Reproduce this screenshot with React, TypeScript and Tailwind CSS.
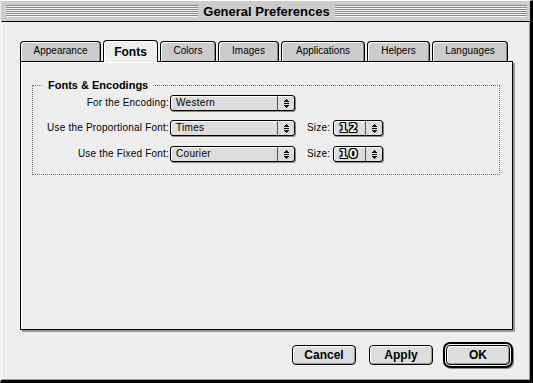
import React from "react";

function Arrows() {
  return (
    <svg width="7" height="9" viewBox="0 0 7 9" shapeRendering="crispEdges">
      <rect x="3" y="0" width="1" height="1" fill="#000" />
      <rect x="2" y="1" width="3" height="1" fill="#000" />
      <rect x="1" y="2" width="5" height="1" fill="#000" />
      <rect x="1" y="4" width="5" height="1" fill="#000" />
      <rect x="1" y="6" width="5" height="1" fill="#000" />
      <rect x="2" y="7" width="3" height="1" fill="#000" />
      <rect x="3" y="8" width="1" height="1" fill="#000" />
    </svg>
  );
}

function Popup({ widthClass, children }: { widthClass: string; children: React.ReactNode }) {
  return (
    <div
      className={`${widthClass} h-[16px] flex items-stretch border border-black rounded-[3px] bg-[#dddddd] shadow-[inset_1px_1px_0_#ffffff,1px_1px_0_#888888]`}
    >
      <div className="flex-1 flex items-center pl-[5px] text-[10px] leading-none tracking-[0.3px]">{children}</div>
      <div className="w-[17px] flex items-center justify-center border-l border-[#555]">
        <Arrows />
      </div>
    </div>
  );
}

function Outlined({ text }: { text: string }) {
  return (
    <span className="font-['DejaVu_Sans',sans-serif] font-bold text-[12px] leading-none text-[#eeeeee] tracking-[1.5px] [text-shadow:1px_0_0_#000,-1px_0_0_#000,0_1px_0_#000,0_-1px_0_#000,1px_1px_0_#000,-1px_-1px_0_#000,1px_-1px_0_#000,-1px_1px_0_#000]">
      {text}
    </span>
  );
}

const tabs = [
  { label: "Appearance", w: "w-[81px]" },
  { label: "Fonts", w: "w-[55px]", active: true },
  { label: "Colors", w: "w-[56px]" },
  { label: "Images", w: "w-[61px]" },
  { label: "Applications", w: "w-[84px]" },
  { label: "Helpers", w: "w-[63px]" },
  { label: "Languages", w: "w-[76px]" },
];

function Button({ children }: { children: React.ReactNode }) {
  return (
    <div className="w-[64px] h-[20px] flex items-center justify-center border border-black rounded-[4px] bg-[#dddddd] shadow-[inset_1px_1px_0_#ffffff,inset_-1px_-1px_0_#999999] text-[12px] font-bold leading-none">
      {children}
    </div>
  );
}

export default function App() {
  return (
    <div className="w-[533px] h-[383px] flex flex-col bg-[#cccccc] border-l border-t border-l-[#eeeeee] border-t-[#ffffff] border-r-[3px] border-b-[3px] border-r-black border-b-black font-['Liberation_Sans',Arial,sans-serif] text-black overflow-hidden select-none">
      {/* Title bar */}
      <div className="h-[20px] flex items-center pl-[5px] pr-[3px]">
        <div className="flex-1 h-[12px] bg-[repeating-linear-gradient(to_bottom,#888888_0px,#888888_1px,#f4f4f4_1px,#f4f4f4_2px)]" />
        <div className="px-[5px] text-[13px] font-bold leading-none">General Preferences</div>
        <div className="flex-1 h-[12px] bg-[repeating-linear-gradient(to_bottom,#888888_0px,#888888_1px,#f4f4f4_1px,#f4f4f4_2px)]" />
      </div>

      {/* Content */}
      <div className="flex-1 bg-[#eeeeee] border-t border-t-black border-l border-l-white border-r border-r-[#999999] border-b border-b-[#999999] pl-[18px] pt-[18px]">
        <div className="w-[493px] flex flex-col">
          {/* Tabs */}
          <div className="h-[21px] flex items-end gap-[2px] relative z-10">
            {tabs.map((t) =>
              t.active ? (
                <div
                  key={t.label}
                  className={`${t.w} h-[22px] -mb-[1px] flex items-center justify-center border border-b-0 border-black rounded-t-[4px] bg-[#eeeeee] shadow-[inset_1px_1px_0_#ffffff] text-[12px] font-bold leading-none`}
                >
                  {t.label}
                </div>
              ) : (
                <div
                  key={t.label}
                  className={`${t.w} h-[20px] flex items-center justify-center border border-b-0 border-black rounded-t-[4px] bg-[#cccccc] shadow-[inset_1px_1px_0_#ffffff,inset_-1px_0_0_#888888] text-[10px] leading-none pb-[1px]`}
                >
                  {t.label}
                </div>
              )
            )}
          </div>

          {/* Panel */}
          <div className="h-[269px] border border-black bg-[#eeeeee] shadow-[inset_1px_1px_0_#ffffff,2px_2px_0_#999999]">
            <fieldset className="ml-[11px] mt-[17px] w-[468px] border border-dotted border-[#777777] pt-[3px] pb-[12px]">
              <legend className="ml-[10px] pl-[5px] pr-[4px] text-[11px] font-bold leading-[13px]">Fonts &amp; Encodings</legend>
              <div className="flex items-center h-[16px]">
                <div className="w-[136px] text-right text-[10px] tracking-[0.2px] leading-none">For the Encoding:</div>
                <div className="ml-[1px]">
                  <Popup widthClass="w-[125px]">Western</Popup>
                </div>
              </div>
              <div className="flex items-center h-[16px] mt-[9px]">
                <div className="w-[136px] text-right text-[10px] tracking-[0.2px] leading-none">Use the Proportional Font:</div>
                <div className="ml-[1px]">
                  <Popup widthClass="w-[125px]">Times</Popup>
                </div>
                <div className="ml-[12px] text-[10px] tracking-[0.2px] leading-none">Size:</div>
                <div className="ml-[3px]">
                  <Popup widthClass="w-[50px]">
                    <Outlined text="12" />
                  </Popup>
                </div>
              </div>
              <div className="flex items-center h-[16px] mt-[10px]">
                <div className="w-[136px] text-right text-[10px] tracking-[0.2px] leading-none">Use the Fixed Font:</div>
                <div className="ml-[1px]">
                  <Popup widthClass="w-[125px]">Courier</Popup>
                </div>
                <div className="ml-[12px] text-[10px] tracking-[0.2px] leading-none">Size:</div>
                <div className="ml-[3px]">
                  <Popup widthClass="w-[50px]">
                    <Outlined text="10" />
                  </Popup>
                </div>
              </div>
            </fieldset>
          </div>

          {/* Buttons */}
          <div className="mt-[12px] flex justify-end items-center">
            <Button>Cancel</Button>
            <div className="ml-[13px]">
              <Button>Apply</Button>
            </div>
            <div className="ml-[10px] border-2 border-black rounded-[7px] p-[1px] shadow-[1px_1px_0_#888888]">
              <Button>OK</Button>
            </div>
          </div>
        </div>
      </div>
    </div>
  );
}
